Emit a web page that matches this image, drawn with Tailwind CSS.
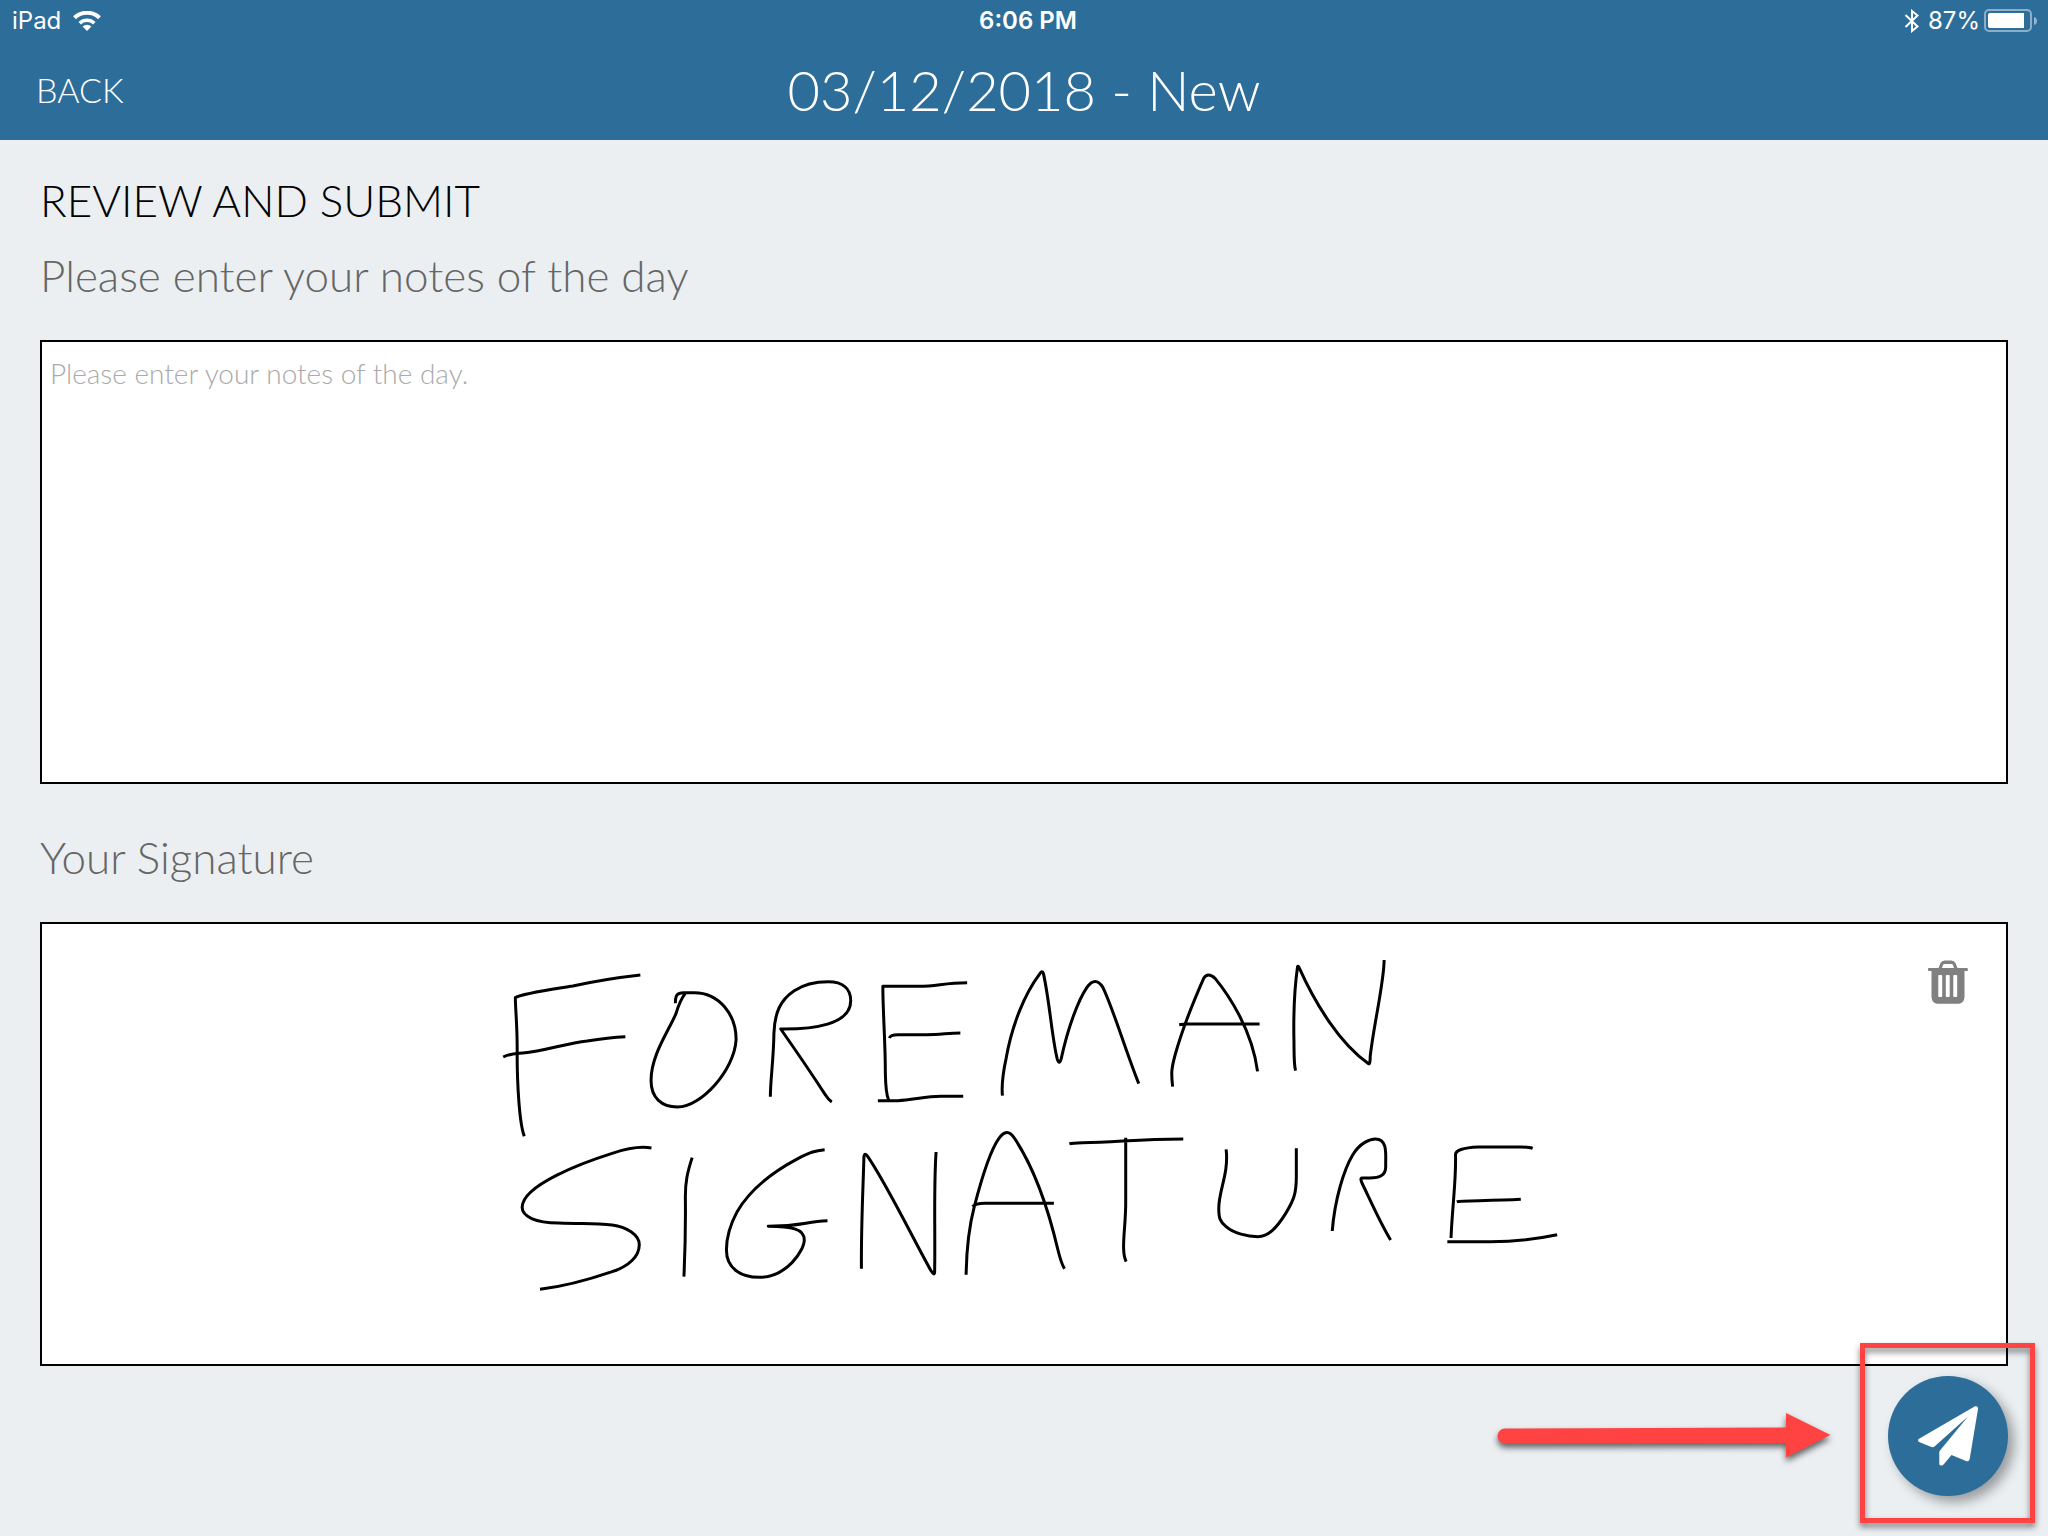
<!DOCTYPE html>
<html lang="en">
<head>
<meta charset="utf-8">
<meta name="viewport" content="width=device-width, initial-scale=1">
<title>Review and Submit</title>
<script src="https://cdn.jsdelivr.net/npm/@tailwindcss/browser@4"></script>
</head>
<body class="relative min-h-screen bg-[#ebeff2] font-['Lato',sans-serif] font-light text-black">

<header class="bg-[#2d6d9a] text-white">
  <!-- Status bar -->
  <div class="grid h-10 grid-cols-[1fr_auto_1fr] items-center pt-0.5 pr-2 pl-3 font-['Inter',sans-serif] text-2xl font-normal">
    <div class="flex items-center gap-3">
      <span>iPad</span>
      <svg class="h-5 w-7" viewBox="0 0 28 20" fill="none" aria-hidden="true">
        <path d="M1.5 6.8a18 18 0 0 1 25 0" stroke="#fff" stroke-width="4"/>
        <path d="M6.7 12.2a10.6 10.6 0 0 1 14.6 0" stroke="#fff" stroke-width="3.6"/>
        <path d="M14 20l-4.4-4.4a6.4 6.4 0 0 1 8.8 0z" fill="#fff"/>
      </svg>
    </div>
    <div class="pl-1 text-center font-semibold">6:06 PM</div>
    <div class="flex items-center justify-end">
      <svg class="mr-2 h-6 w-4" viewBox="0 0 16 24" fill="none" stroke="#fff" stroke-width="2" aria-hidden="true">
        <path d="M1.500 6l12 11.500L8 22V2l5.500 4.500L1.500 18"/>
      </svg>
      <span class="mr-1">87%</span>
      <svg class="h-6 w-14" viewBox="0 0 56 24" fill="none" aria-hidden="true">
        <rect x="1" y="1" width="46" height="21" rx="4" stroke="#fff" stroke-opacity=".45" stroke-width="2"/>
        <path d="M6 4h34v15H6a2 2 0 0 1-2-2V6a2 2 0 0 1 2-2z" fill="#fff"/>
        <path d="M50 8c4 1 4 7 0 8z" fill="#fff" fill-opacity=".5"/>
      </svg>
    </div>
  </div>
  <!-- Navigation bar -->
  <div class="grid h-25 grid-cols-[1fr_auto_1fr] items-center px-9">
    <button type="button" class="justify-self-start text-[34px] leading-10">BACK</button>
    <h1 class="text-[56px] leading-16">03/12/2018 - New</h1>
  </div>
</header>

<main class="px-10 pt-[30px]">
  <h2 class="text-[44px] leading-15">REVIEW AND SUBMIT</h2>
  <label for="notes" class="mt-[15px] block text-[44px] leading-15 text-[#666]">Please enter your notes of the day</label>
  <textarea id="notes" class="mt-[35px] block h-111 w-full resize-none border-2 border-black bg-white px-2 py-[11px] text-[28px] leading-10 placeholder:text-[#aaa]" placeholder="Please enter your notes of the day."></textarea>

  <h3 id="signature-label" class="mt-[43px] text-[44px] leading-15 text-[#666]">Your Signature</h3>
  <section aria-labelledby="signature-label" class="relative mt-[35px] h-111 border-2 border-black bg-white">
    <svg class="h-full w-full" viewBox="0 0 1964 440" fill="none" stroke="#000" stroke-width="3" stroke-linejoin="round" aria-hidden="true">
      <g transform="translate(438 16) scale(.35714 .33333)">
        <g id="fore">
          <path vector-effect="non-scaling-stroke" d="M449 105C390 112 320 124 260 138C190 150 120 160 99 173C99 210 105 260 104 340C104 430 110 550 124 589"/>
          <path vector-effect="non-scaling-stroke" d="M65 351C85 340 95 341 120 339C180 334 240 310 300 303Q360 292 407 290"/>
          <path vector-effect="non-scaling-stroke" d="M547 190C547 165 552 158 570 158H600C670 158 718 225 717 300C712 390 620 501 553 501C510 501 478 475 479 420C479 345 530 270 549 220Q560 180 575 160"/>
          <path vector-effect="non-scaling-stroke" d="M813 470C813 420 822 360 823 280C825 220 840 180 880 152C910 130 945 125 975 125C1015 125 1038 145 1038 182C1038 255 930 268 842 267C880 325 940 420 968 466Q976 480 985 486"/>
          <path vector-effect="non-scaling-stroke" d="M1364 128C1300 128 1280 139 1230 139H1128C1128 220 1135 300 1135 400Q1136 460 1144 480M1146 294Q1150 284 1170 284H1250C1290 284 1310 279 1345 279M1114 482H1170C1210 480 1250 469 1290 469H1353"/>
        </g>
        <g id="sign">
          <path vector-effect="non-scaling-stroke" d="M480 624C450 618 420 622 370 640C290 667 118 735 118 802C118 830 155 848 220 849C290 852 320 849 370 855C410 860 446 885 446 914C446 950 415 980 370 995C310 1017 230 1040 168 1048"/>
          <path vector-effect="non-scaling-stroke" d="M594 653C580 700 575 725 575 770C576 850 574 940 571 1010"/>
          <path vector-effect="non-scaling-stroke" d="M965 629C940 632 925 636 890 656C800 707 750 760 720 815C695 865 690 900 690 930C690 985 730 1012 782 1012C860 1012 908 930 908 900C908 865 870 860 807 859C900 859 910 845 973 842"/>
          <path vector-effect="non-scaling-stroke" d="M1068 986C1067 850 1073 740 1075 650Q1077 636 1086 650C1140 736 1200 870 1262 991Q1273 1010 1273 995C1275 870 1270 750 1277 636"/>
        </g>
      </g>
      <g transform="translate(918 16) scale(.40816 .33333)">
        <g id="man">
          <path vector-effect="non-scaling-stroke" d="M104 467C101 430 105 400 113 355C128 250 160 160 194 104Q202 86 205 104C220 190 225 290 238 356Q243 378 248 356C265 260 290 180 311 142Q332 107 350 142C375 205 405 330 438 431"/>
          <path vector-effect="non-scaling-stroke" d="M521 440C517 400 518 385 527 345C545 265 570 190 597 115Q607 95 625 115C655 160 715 265 729 394M537 254Q545 252 560 252H734"/>
          <path vector-effect="non-scaling-stroke" d="M822 392C817 365 819 330 818 290C817 210 820 140 827 80Q829 76 832 86C870 190 930 310 1001 371Q1005 374 1005 350C1012 265 1040 120 1039 60"/>
        </g>
        <g id="ature">
          <path vector-effect="non-scaling-stroke" d="M15 1004C16 930 20 870 35 800C52 720 75 630 95 596Q115 560 133 594C180 680 215 800 240 930Q248 970 256 986M31 800Q38 790 60 790H230"/>
          <path vector-effect="non-scaling-stroke" d="M268 611Q275 609 300 608C380 608 430 597 547 597M406 593V780C407 860 393 930 407 965"/>
          <path vector-effect="non-scaling-stroke" d="M652 628C659 700 634 750 634 805C634 835 637 845 652 860C670 880 705 890 730 890C755 890 775 865 798 820C818 780 824 760 824 710V625"/>
          <path vector-effect="non-scaling-stroke" d="M912 873C918 780 940 690 962 645C980 608 1005 597 1018 597C1050 597 1042 650 1043 680C1043 705 1030 715 1000 714H985Q979 714 986 732C1005 780 1030 850 1055 900"/>
          <path vector-effect="non-scaling-stroke" d="M1403 625Q1395 621 1375 621H1270Q1213 624 1214 645C1216 720 1206 800 1203 894M1217 785C1230 780 1300 784 1374 778M1194 905H1300C1360 905 1420 895 1463 884"/>
        </g>
      </g>
    </svg>
    <button type="button" aria-label="Clear signature" class="absolute top-9 right-[38px]">
      <svg class="h-11 w-10" viewBox="0 0 40 44" aria-hidden="true">
        <path fill="#808080" fill-rule="evenodd" d="M0 10V8.500Q0 8 1 8H10.500L12.500 3Q14 .5 16.500 .5H23.500Q26 .5 27.500 3L29.500 8H39Q39.800 8 39.800 8.800V10.500Q39.800 11 39 11H36.500V37Q36 43 31 43.700H9Q4 43 3.500 37V11H1Q0 11 0 10zM14 8H26L25 5Q24.500 4 23.500 4H16.500Q15.500 4 15 5zM11 15Q10.300 15 10.300 16V36Q10.300 37 11 37H13.500Q14.200 37 14.200 36V16Q14.200 15 13.500 15zM18.500 15Q17.800 15 17.800 16V36Q17.800 37 18.500 37H21Q21.700 37 21.700 36V16Q21.700 15 21 15zM26 15Q25.300 15 25.300 16V36Q25.300 37 26 37H28.500Q29.200 37 29.200 36V16Q29.200 15 28.500 15z"/>
      </svg>
    </button>
  </section>
</main>

<!-- Floating submit button -->
<button type="button" aria-label="Submit" class="absolute right-10 bottom-10 size-30 rounded-full bg-[#2d6d9a] shadow-[6px_6px_12px_rgba(0,0,0,0.35)]">
  <svg class="size-30" viewBox="0 0 120 120" fill="#fff" aria-hidden="true">
    <path d="M87 30.300Q90.300 29.500 90 33L81.700 83Q81 86 78 85L63.500 79L56 88Q54.500 90 52.500 89.500Q51 89 51.300 87V76.500Q51.300 75.500 52 74.500L80 40.500L46.500 70.500Q45 71.500 43.500 71L31 66Q29.500 65 30.200 63.200z"/>
  </svg>
</button>

<!-- Callout frame and arrow -->
<div class="pointer-events-none absolute right-[13px] bottom-[13px] h-45 w-[175px] border-5 border-[#ff4343] drop-shadow-[0_4px_3px_rgba(0,0,0,0.5)]"></div>
<svg class="pointer-events-none absolute right-[217px] bottom-[71px] h-[57px] w-[336px] overflow-visible drop-shadow-[0_4px_3px_rgba(0,0,0,0.6)]" viewBox="0 0 336 57" fill="#ff4343" aria-hidden="true">
  <path d="M10 20.500L291 19.500V5L335.500 27L291 49.500V35L10 35.500A7.500 7.500 0 0 1 10 20.500z"/>
</svg>

</body>
</html>
